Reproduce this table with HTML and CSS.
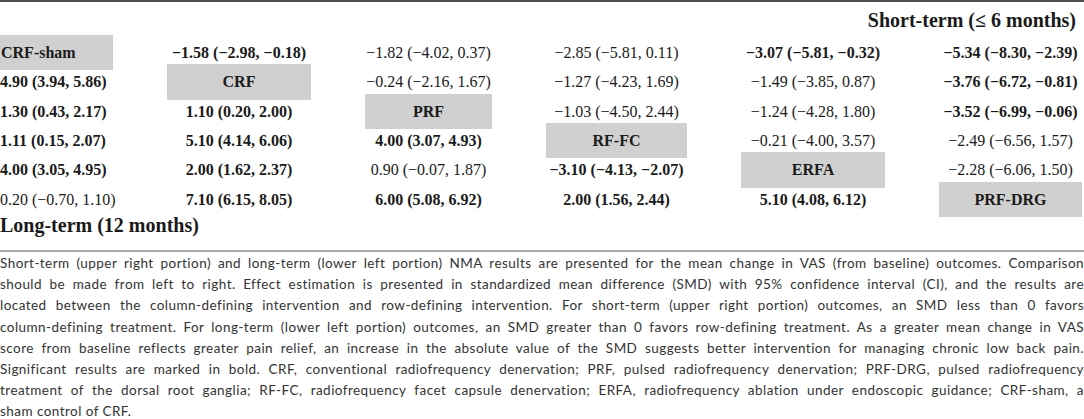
FILE: index.html
```html
<!DOCTYPE html>
<html>
<head>
<meta charset="utf-8">
<link rel="stylesheet" href="styles.css">
</head>
<body>
<div class="table-wrap">
  <div class="title-short">Short-term (≤ 6 months)</div>
  <div class="matrix">
    <div class="cell first lbl">CRF-sham</div>
    <div class="cell b">−1.58 (−2.98, −0.18)</div>
    <div class="cell">−1.82 (−4.02, 0.37)</div>
    <div class="cell">−2.85 (−5.81, 0.11)</div>
    <div class="cell b">−3.07 (−5.81, −0.32)</div>
    <div class="cell b">−5.34 (−8.30, −2.39)</div>

    <div class="cell first b">4.90 (3.94, 5.86)</div>
    <div class="cell lbl">CRF</div>
    <div class="cell">−0.24 (−2.16, 1.67)</div>
    <div class="cell">−1.27 (−4.23, 1.69)</div>
    <div class="cell">−1.49 (−3.85, 0.87)</div>
    <div class="cell b">−3.76 (−6.72, −0.81)</div>

    <div class="cell first b">1.30 (0.43, 2.17)</div>
    <div class="cell b">1.10 (0.20, 2.00)</div>
    <div class="cell lbl">PRF</div>
    <div class="cell">−1.03 (−4.50, 2.44)</div>
    <div class="cell">−1.24 (−4.28, 1.80)</div>
    <div class="cell b">−3.52 (−6.99, −0.06)</div>

    <div class="cell first b">1.11 (0.15, 2.07)</div>
    <div class="cell b">5.10 (4.14, 6.06)</div>
    <div class="cell b">4.00 (3.07, 4.93)</div>
    <div class="cell lbl">RF-FC</div>
    <div class="cell">−0.21 (−4.00, 3.57)</div>
    <div class="cell">−2.49 (−6.56, 1.57)</div>

    <div class="cell first b">4.00 (3.05, 4.95)</div>
    <div class="cell b">2.00 (1.62, 2.37)</div>
    <div class="cell">0.90 (−0.07, 1.87)</div>
    <div class="cell b">−3.10 (−4.13, −2.07)</div>
    <div class="cell lbl">ERFA</div>
    <div class="cell">−2.28 (−6.06, 1.50)</div>

    <div class="cell first">0.20 (−0.70, 1.10)</div>
    <div class="cell b">7.10 (6.15, 8.05)</div>
    <div class="cell b">6.00 (5.08, 6.92)</div>
    <div class="cell b">2.00 (1.56, 2.44)</div>
    <div class="cell b">5.10 (4.08, 6.12)</div>
    <div class="cell lbl">PRF-DRG</div>
  </div>
  <div class="title-long">Long-term (12 months)</div>
</div>
<div class="footnote">
  <span class="line">Short-term (upper right portion) and long-term (lower left portion) NMA results are presented for the mean change in VAS (from baseline) outcomes. Comparison</span>
  <span class="line">should be made from left to right. Effect estimation is presented in standardized mean difference (SMD) with 95% confidence interval (CI), and the results are</span>
  <span class="line">located between the column-defining intervention and row-defining intervention. For short-term (upper right portion) outcomes, an SMD less than 0 favors</span>
  <span class="line">column-defining treatment. For long-term (lower left portion) outcomes, an SMD greater than 0 favors row-defining treatment. As a greater mean change in VAS</span>
  <span class="line">score from baseline reflects greater pain relief, an increase in the absolute value of the SMD suggests better intervention for managing chronic low back pain.</span>
  <span class="line">Significant results are marked in bold. CRF, conventional radiofrequency denervation; PRF, pulsed radiofrequency denervation; PRF-DRG, pulsed radiofrequency</span>
  <span class="line">treatment of the dorsal root ganglia; RF-FC, radiofrequency facet capsule denervation; ERFA, radiofrequency ablation under endoscopic guidance; CRF-sham, a</span>
  <span class="line last">sham control of CRF.</span>
</div>
</body>
</html>
```
FILE: styles.css
```css
html, body {
  margin: 0;
  padding: 0;
  background: #ffffff;
}

body {
  width: 1084px;
  font-family: "Liberation Serif", "Times New Roman", serif;
  color: #1a1a1a;
  overflow: hidden;
}

.table-wrap {
  border-top: 2px solid #4d4d4d;
}

.title-short {
  text-align: right;
  font-weight: bold;
  font-size: 20px;
  line-height: 36px;
  padding-right: 8px;
}

.matrix {
  display: grid;
  grid-template-columns: 113px 144px 127px 141px 144px 143px;
  column-gap: 54px;
  grid-auto-rows: 29.33px;
  font-size: 16px;
  line-height: 29.33px;
}

.cell {
  text-align: center;
  white-space: nowrap;
}

.cell.first {
  text-align: left;
}

.b {
  font-weight: bold;
}

.lbl {
  background: #d0d0d0;
  font-weight: bold;
  margin: -3px 0;
  line-height: 35.33px;
}

.cell.first.lbl {
  padding-left: 1px;
}

.title-long {
  font-weight: bold;
  font-size: 20px;
  line-height: 22.5px;
  margin-bottom: 13.5px;
}

.footnote {
  border-top: 2px solid #a9a9a9;
  padding-top: 1px;
  font-family: "Lato", "Open Sans", sans-serif;
  font-size: 13.5px;
  line-height: 21.2px;
  letter-spacing: 0.45px;
  color: #333333;
}

.line {
  display: block;
  text-align: justify;
  text-align-last: justify;
  white-space: nowrap;
}

.line.last {
  text-align-last: left;
}
```
